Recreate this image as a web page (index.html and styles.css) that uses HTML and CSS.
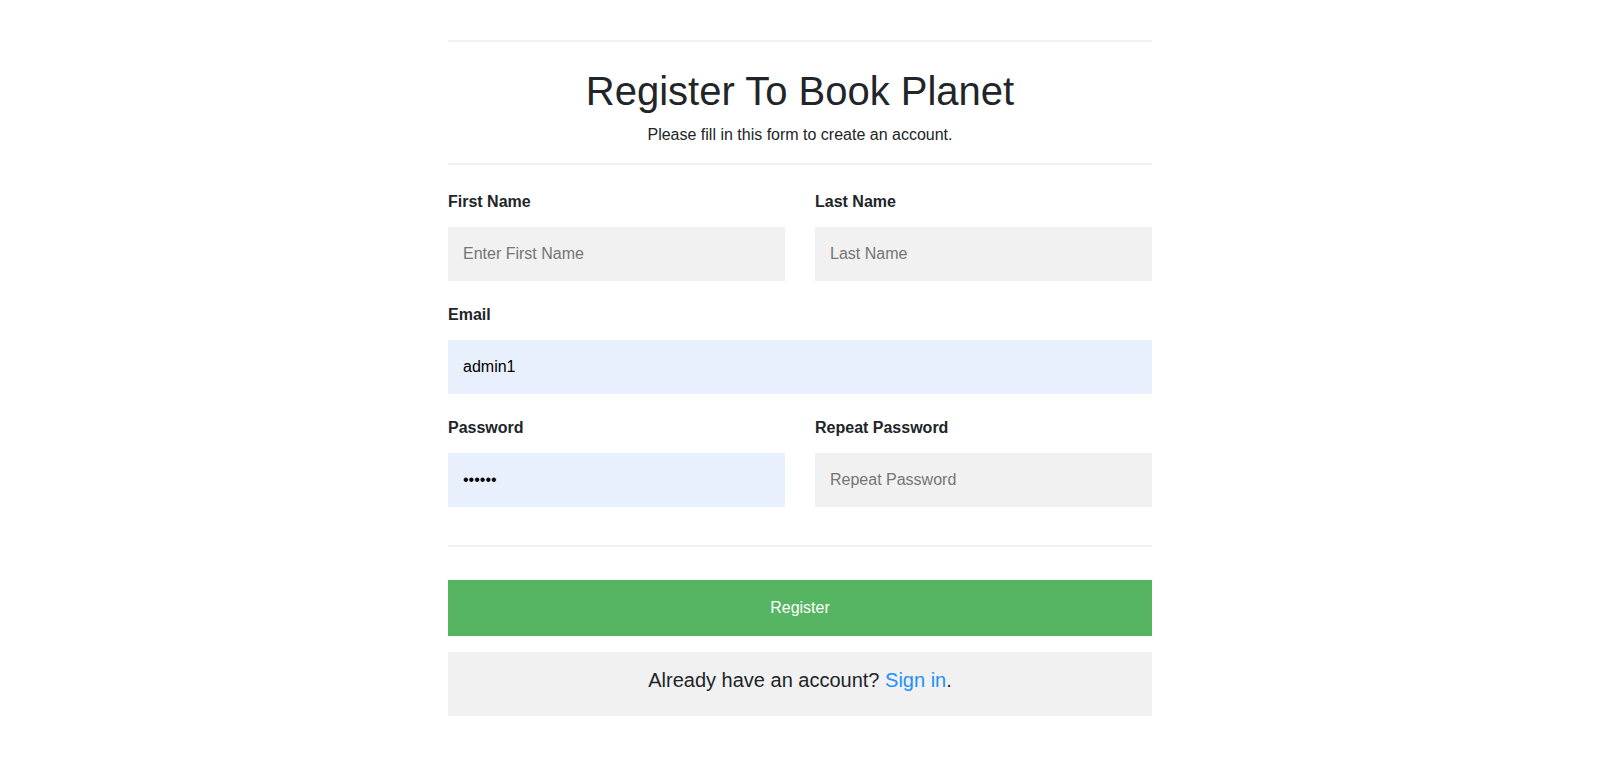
FILE: index.html
```html
<!DOCTYPE html>
<html lang="en">
<head>
<meta charset="utf-8">
<title>Register To Book Planet</title>
<link rel="stylesheet" href="styles.css">
</head>
<body>
<form class="container">
  <hr class="rule">
  <div class="header">
    <h1 class="title">Register To Book Planet</h1>
    <p class="subtitle">Please fill in this form to create an account.</p>
  </div>
  <hr class="rule">
  <div class="fields">
    <div class="field">
      <label class="label" for="fname">First Name</label>
      <input class="input" id="fname" type="text" placeholder="Enter First Name">
    </div>
    <div class="field">
      <label class="label" for="lname">Last Name</label>
      <input class="input" id="lname" type="text" placeholder="Last Name">
    </div>
    <div class="field field-full">
      <label class="label" for="email">Email</label>
      <input class="input input-filled" id="email" type="text" value="admin1">
    </div>
    <div class="field">
      <label class="label" for="psw">Password</label>
      <input class="input input-filled" id="psw" type="password" value="123456">
    </div>
    <div class="field">
      <label class="label" for="psw2">Repeat Password</label>
      <input class="input" id="psw2" type="password" placeholder="Repeat Password">
    </div>
  </div>
  <hr class="rule">
  <div class="actions">
    <button class="register-btn" type="button">Register</button>
    <div class="signin">
      <p class="signin-text">Already have an account? <a class="signin-link" href="#">Sign in</a>.</p>
    </div>
  </div>
</form>
</body>
</html>
```
FILE: styles.css
```css
* {
  box-sizing: border-box;
}

html, body {
  margin: 0;
  padding: 0;
  background: #fff;
}

body {
  font-family: "Liberation Sans", Arial, Helvetica, sans-serif;
  font-size: 16px;
  line-height: 1.5;
  color: #212529;
}

.container {
  width: 704px;
  margin: 0 auto;
  padding: 24px 0 0 0;
}

.rule {
  height: 0;
  border: 1px solid #f1f1f1;
  margin: 16px 0 25px 0;
}

.header {
  text-align: center;
}

.title {
  margin: 0 0 8px 0;
  font-size: 40px;
  font-weight: 400;
  line-height: 1.2;
}

.subtitle {
  margin: 0 0 16px 0;
}

.fields {
  display: grid;
  grid-template-columns: 1fr 1fr;
  column-gap: 30px;
}

.field {
  display: flex;
  flex-direction: column;
}

.field-full {
  grid-column: 1 / -1;
}

.label {
  display: block;
  font-weight: 700;
  margin-bottom: 8px;
}

.input {
  display: block;
  width: 100%;
  height: 54px;
  padding: 15px;
  margin: 5px 0 22px 0;
  border: none;
  outline: none;
  background: #f1f1f1;
  font-family: inherit;
  font-size: 16px;
  color: #000;
}

.input::placeholder {
  color: #757575;
}

.input-filled {
  background: #e8f0fe;
}

.actions {
  display: flex;
  flex-direction: column;
}

.register-btn {
  display: block;
  width: 100%;
  padding: 16px 20px;
  margin: 8px 0;
  border: none;
  background-color: #55b562;
  color: #fff;
  font-family: inherit;
  font-size: 16px;
  line-height: 24px;
  cursor: pointer;
}

.signin {
  margin-top: 8px;
  padding: 13px 16px 21px 16px;
  background-color: #f1f1f1;
  text-align: center;
}

.signin-text {
  margin: 0;
  font-size: 20px;
  line-height: 30px;
}

.signin-link {
  color: dodgerblue;
  text-decoration: none;
}
```
